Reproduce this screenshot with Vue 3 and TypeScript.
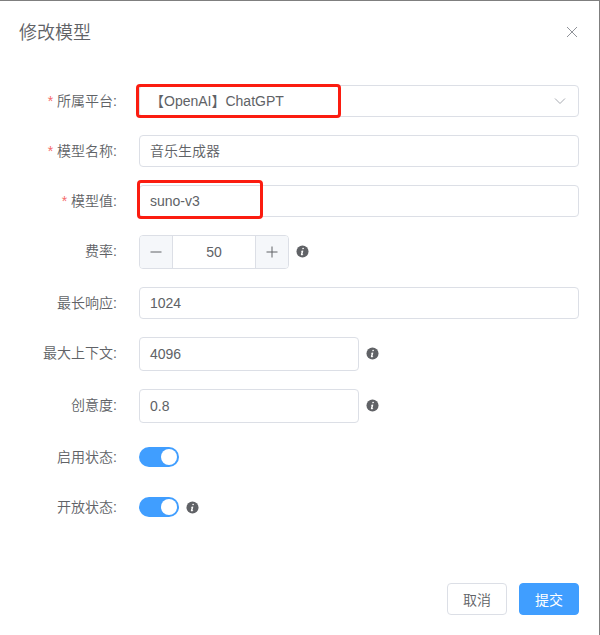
<template>
  <div class="dialog">
    <svg class="defs" width="0" height="0" aria-hidden="true">
      <symbol id="info" viewBox="0 0 14 14">
        <circle cx="7" cy="7" r="6.5" fill="#606266" />
        <path d="M7.7 2.9a.9.9 0 1 1-.1 1.8.9.9 0 0 1 .1-1.8ZM8 5.9 7 9.7c-.1.4.1.5.6.2l.2.5c-.7.6-1.3.8-1.9.7-.6-.1-.8-.5-.6-1.1l.7-2.7c.1-.4-.1-.5-.6-.3l-.1-.5c.7-.5 1.3-.7 1.9-.7.3 0 .6.2.8.6Z" fill="#fff" />
      </symbol>
    </svg>

    <header class="head">
      <span class="title">修改模型</span>
      <svg class="close" viewBox="0 0 12 12" width="12" height="12">
        <path d="M1 1 11 11M11 1 1 11" stroke="#909399" stroke-width="1" fill="none" />
      </svg>
    </header>

    <form class="form" @submit.prevent>
      <div class="row">
        <label class="label required">所属平台:</label>
        <div class="control">
          <div class="input select">
            <span>【OpenAI】ChatGPT</span>
            <svg class="arrow" viewBox="0 0 12 8" width="12" height="8">
              <path d="M1 1.5 6 6.5 11 1.5" stroke="#a8abb2" stroke-width="1" fill="none" />
            </svg>
          </div>
          <div class="mark mark-platform"></div>
        </div>
      </div>

      <div class="row">
        <label class="label required">模型名称:</label>
        <div class="control">
          <div class="input">音乐生成器</div>
        </div>
      </div>

      <div class="row">
        <label class="label required">模型值:</label>
        <div class="control">
          <div class="input">suno-v3</div>
          <div class="mark mark-value"></div>
        </div>
      </div>

      <div class="row tall">
        <label class="label">费率:</label>
        <div class="control">
          <div class="number">
            <span class="step left">
              <svg viewBox="0 0 12 12" width="12" height="12"><path d="M0.5 6H11.5" stroke="#606266" fill="none" /></svg>
            </span>
            <span class="value">50</span>
            <span class="step right">
              <svg viewBox="0 0 12 12" width="12" height="12"><path d="M0.5 6H11.5M6 0.5V11.5" stroke="#606266" fill="none" /></svg>
            </span>
          </div>
          <svg class="tip"><use href="#info" /></svg>
        </div>
      </div>

      <div class="row">
        <label class="label">最长响应:</label>
        <div class="control">
          <div class="input">1024</div>
        </div>
      </div>

      <div class="row tall">
        <label class="label">最大上下文:</label>
        <div class="control">
          <div class="input short">4096</div>
          <svg class="tip"><use href="#info" /></svg>
        </div>
      </div>

      <div class="row tall">
        <label class="label">创意度:</label>
        <div class="control">
          <div class="input short">0.8</div>
          <svg class="tip"><use href="#info" /></svg>
        </div>
      </div>

      <div class="row">
        <label class="label">启用状态:</label>
        <div class="control">
          <span class="switch"><i></i></span>
        </div>
      </div>

      <div class="row">
        <label class="label">开放状态:</label>
        <div class="control">
          <span class="switch"><i></i></span>
          <svg class="tip"><use href="#info" /></svg>
        </div>
      </div>
    </form>

    <footer class="foot">
      <button class="btn" type="button">取消</button>
      <button class="btn primary" type="button">提交</button>
    </footer>
  </div>
</template>

<script setup lang="ts">
</script>

<style>
html,
body {
  margin: 0;
  background: #fff;
}
</style>

<style scoped>
.dialog {
  position: relative;
  box-sizing: border-box;
  width: 600px;
  height: 635px;
  display: flex;
  flex-direction: column;
  background: #fff;
  border-top: 1px solid #7f7f7f;
  border-right: 1px solid #7f7f7f;
  font-family: "Liberation Sans", "Noto Sans CJK SC", sans-serif;
  font-size: 14px;
  font-weight: 350;
  color: #606266;
}

.defs {
  position: absolute;
}

.head {
  display: flex;
  align-items: center;
  justify-content: space-between;
  height: 24px;
  padding: 20px 21px 0 19px;
}

.title {
  font-size: 18px;
  line-height: 24px;
  color: #606266;
}

.close {
  margin-bottom: 2px;
}

.form {
  display: flex;
  flex-direction: column;
  gap: 18px;
  padding: 40px 20px 0 0;
}

.row {
  display: flex;
  align-items: flex-start;
  min-height: 32px;
}

.row.tall {
  min-height: 34px;
}

.label {
  box-sizing: border-box;
  width: 139px;
  padding-right: 22px;
  text-align: right;
  line-height: 32px;
}

.label.required::before {
  content: "*";
  margin-right: 4px;
  color: #f56c6c;
}

.control {
  position: relative;
  flex: 1;
  display: flex;
  align-items: center;
  min-height: inherit;
}

.input {
  box-sizing: border-box;
  flex: 1;
  height: 32px;
  padding: 0 10px;
  border: 1px solid #dcdfe6;
  border-radius: 4px;
  line-height: 30px;
}

.input.short {
  flex: none;
  width: 220px;
  height: 34px;
  line-height: 32px;
}

.select {
  display: flex;
  align-items: center;
  justify-content: space-between;
  padding-right: 12px;
}

.number {
  box-sizing: border-box;
  display: flex;
  width: 150px;
  height: 34px;
  border: 1px solid #dcdfe6;
  border-radius: 4px;
  overflow: hidden;
}

.step {
  width: 32px;
  display: flex;
  align-items: center;
  justify-content: center;
  background: #f5f7fa;
}

.step.left {
  border-right: 1px solid #dcdfe6;
}

.step.right {
  border-left: 1px solid #dcdfe6;
}

.value {
  flex: 1;
  text-align: center;
  line-height: 32px;
}

.tip {
  width: 13px;
  height: 13px;
  margin-left: 7px;
}

.row.tall .tip {
  margin-bottom: 2px;
}

.switch {
  position: relative;
  display: block;
  width: 40px;
  height: 20px;
  border-radius: 10px;
  background: #409eff;
}

.switch i {
  position: absolute;
  top: 2px;
  right: 2px;
  width: 16px;
  height: 16px;
  border-radius: 50%;
  background: #fff;
}

.mark {
  position: absolute;
  box-sizing: border-box;
  border: 3px solid #fb1c10;
  border-radius: 4px;
}

.mark-platform {
  left: -3px;
  top: -1px;
  width: 205px;
  height: 34px;
}

.mark-value {
  left: -2px;
  top: -5px;
  width: 126px;
  height: 39px;
}

.foot {
  margin-top: auto;
  display: flex;
  justify-content: flex-end;
  gap: 12px;
  padding: 0 20px 20px 0;
}

.btn {
  box-sizing: border-box;
  width: 60px;
  height: 32px;
  padding: 0;
  border: 1px solid #dcdfe6;
  border-radius: 4px;
  background: #fff;
  font: inherit;
  color: #606266;
}

.btn.primary {
  border-color: #409eff;
  background: #409eff;
  font-weight: 400;
  color: #fff;
}
</style>
